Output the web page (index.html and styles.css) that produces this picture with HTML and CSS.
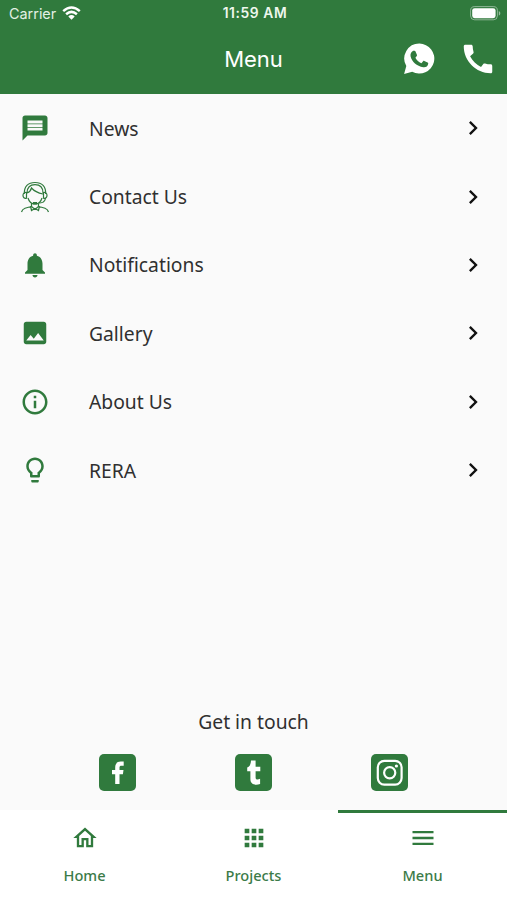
FILE: index.html
```html
<!DOCTYPE html>
<html lang="en">
<head>
<meta charset="utf-8">
<title>Menu</title>
<link rel="stylesheet" href="styles.css">
</head>
<body>
<header class="header">
  <div class="status">
    <div class="carrier"><span>Carrier</span>
      <svg width="19" height="14" viewBox="0 0 19 14" fill="none" stroke="currentColor" stroke-width="2.5"><path d="M1.2 5.1Q9.5-2 17.8 5.1M4.1 8.2Q9.5 3.6 14.9 8.2"/><path d="M6.3 10.4Q9.5 7.6 12.7 10.4L9.5 13.8Z" fill="currentColor" stroke="none"/></svg>
    </div>
    <time class="clock">11:59 AM</time>
    <svg class="battery" width="31" height="15" viewBox="0 0 31 15"><rect x=".6" y=".6" width="26.8" height="13.2" rx="4" fill="none" stroke="#fff" stroke-opacity=".45"/><rect x="2.2" y="2.2" width="23.4" height="10" rx="2.4" fill="#fff"/><path d="M28.8 5c2 .8 2 3.8 0 4.600z" fill="#fff" fill-opacity=".5"/></svg>
  </div>
  <div class="toolbar">
    <h1 class="title">Menu</h1>
    <div class="actions">
      <svg class="whatsapp" width="32" height="32" viewBox="0 0 32 32"><path fill="currentColor" d="M16.400.600A15 15 0 1 1 9.200 28.800L1.100 31 3.300 23.100A15 15 0 0 1 16.400.600Z"/><path fill="#307a3d" d="M10.200 7.700h1.300c.5 0 .8.3 1 .8l1.400 3.300c.2.5.1.8-.1 1.100l-1.400 1.800c1.300 2.600 3.300 4.400 6 5.500l1.700-2c.3-.4.7-.5 1.200-.3l3.300 1.600c.6.3.7.6.6 1.200-.3 2.600-2.400 3.800-4.900 3.500C13.600 23.300 9 18.600 7.600 13.500 7 11 8.300 8.600 10.200 7.700Z"/></svg>
      <svg class="phone" width="38" height="38" viewBox="0 0 24 24" fill="currentColor"><path d="M20.010 15.380c-1.230 0-2.420-.2-3.530-.56-.35-.12-.74-.03-1.010.24l-1.570 1.970c-2.830-1.350-5.480-3.900-6.890-6.830l1.950-1.660c.27-.28.35-.67.24-1.020-.37-1.110-.56-2.300-.56-3.530 0-.54-.45-.99-.99-.99H4.190C3.650 3 3 3.240 3 3.990 3 13.280 10.730 21 20.010 21c.71 0 .99-.63.99-1.180v-3.450c0-.54-.45-.99-.99-.99z"/></svg>
    </div>
  </div>
</header>
<main class="main">
  <nav class="list">
    <a class="row"><svg class="icon" viewBox="0 0 24 24"><path d="M20 2H4c-1.100 0-1.990.9-1.990 2L2 22l4-4h14c1.100 0 2-.9 2-2V4c0-1.100-.9-2-2-2zm-2 12H6v-2.300h12V14zm0-2.900H6V8.900h12v2.200zm0-2.800H6V6h12v2.300z"/></svg><span>News</span><svg class="chevron" viewBox="0 0 24 24"><path d="M10 6 8.590 7.410 13.170 12l-4.580 4.590L10 18l6-6z"/></svg></a>
    <a class="row"><svg class="icon agent" viewBox="0 0 30 32"><path d="M4.300 13C4 5.500 8 1.500 15 1.500S26 5.500 25.700 13M7 12C7 6.500 10 3.600 15 3.600S23 6.500 23 12M6.500 11.500C4 11 3 12.500 3 14.500s1.300 3.300 3.500 2.700zM23.500 11.500c2.500-.5 3.500 1 3.500 3s-1.300 3.300-3.500 2.700zM7 12c2.500-1 4-2.800 4.500-5 3 3.500 6.500 5 11.500 6M8 17c1 3.500 3.800 6 7 6s6-2.500 7-6M25.500 17.500c-.6 3-3.500 4.700-7.500 4.700M11.500 22v3.500l3.500 3 3.500-3V22M10.500 25l1 4.500 3.500-2 3.500 2 1-4.500M11 25.500l-6 1.700C3 28 2 29 1.500 31M19 25.500l6 1.700c2 .8 3 1.800 3.500 3.800"/><path class="solid" d="M13 21h4v2.500h-4z"/></svg><span>Contact Us</span><svg class="chevron" viewBox="0 0 24 24"><path d="M10 6 8.590 7.410 13.170 12l-4.580 4.590L10 18l6-6z"/></svg></a>
    <a class="row"><svg class="icon" viewBox="0 0 24 24"><path d="M12 22c1.100 0 2-.9 2-2h-4c0 1.100.89 2 2 2zm6-6v-5c0-3.070-1.640-5.640-4.500-6.320V4c0-.83-.67-1.500-1.500-1.500s-1.500.67-1.500 1.500v.68C7.630 5.360 6 7.920 6 11v5l-2 2v1h16v-1l-2-2z"/></svg><span>Notifications</span><svg class="chevron" viewBox="0 0 24 24"><path d="M10 6 8.590 7.410 13.170 12l-4.580 4.590L10 18l6-6z"/></svg></a>
    <a class="row"><svg class="icon" viewBox="0 0 24 24"><path d="M21 19V5c0-1.100-.9-2-2-2H5c-1.100 0-2 .9-2 2v14c0 1.100.9 2 2 2h14c1.100 0 2-.9 2-2zM8.500 13.500l2.500 3.010L14.500 12l4.500 6H5l3.500-4.500z"/></svg><span>Gallery</span><svg class="chevron" viewBox="0 0 24 24"><path d="M10 6 8.590 7.410 13.170 12l-4.580 4.590L10 18l6-6z"/></svg></a>
    <a class="row"><svg class="icon" viewBox="0 0 24 24"><path d="M11 7h2v2h-2zm0 4h2v6h-2zm1-9C6.480 2 2 6.480 2 12s4.480 10 10 10 10-4.480 10-10S17.520 2 12 2zm0 18c-4.410 0-8-3.590-8-8s3.590-8 8-8 8 3.590 8 8-3.590 8-8 8z"/></svg><span>About Us</span><svg class="chevron" viewBox="0 0 24 24"><path d="M10 6 8.590 7.410 13.170 12l-4.580 4.590L10 18l6-6z"/></svg></a>
    <a class="row"><svg class="icon" viewBox="0 0 24 24"><path d="M9 21c0 .55.45 1 1 1h4c.55 0 1-.45 1-1v-1H9v1zm3-19C8.140 2 5 5.140 5 9c0 2.380 1.190 4.470 3 5.740V17c0 .55.45 1 1 1h6c.55 0 1-.45 1-1v-2.260c1.810-1.270 3-3.360 3-5.740 0-3.860-3.140-7-7-7zm2.850 11.100l-.85.6V16h-4v-2.300l-.85-.6C7.800 12.160 7 10.630 7 9c0-2.760 2.240-5 5-5s5 2.240 5 5c0 1.630-.8 3.160-2.150 4.100z"/></svg><span>RERA</span><svg class="chevron" viewBox="0 0 24 24"><path d="M10 6 8.590 7.410 13.170 12l-4.580 4.590L10 18l6-6z"/></svg></a>
  </nav>
  <section class="touch">
    <h2 class="touch-title">Get in touch</h2>
    <div class="social">
      <a><svg viewBox="0 0 37 37"><rect width="37" height="37" rx="5"/><path class="light" d="M16.200 30V20.200H13v-4.200h3.200v-2.700c0-3.700 2.100-5.700 5.600-5.700h2.900v4.100h-2.300c-1.300 0-1.900.6-1.900 1.800V16h4l-.6 4.200h-3.400V30z"/></svg></a>
      <a><svg viewBox="0 0 37 37"><rect width="37" height="37" rx="5"/><path class="light" d="M16 6.500h4.600v6.200h4.700v4.500h-4.700v6.300c0 2.200 1.900 2.700 4.500 1.300V30c-5 1.700-9.700.3-9.700-4.800v-8h-3.200v-3.600c2.500-.9 3.500-3.200 3.800-7.100z"/></svg></a>
      <a><svg viewBox="0 0 37 37"><rect width="37" height="37" rx="5"/><rect class="line" x="6.800" y="6.800" width="23.800" height="23.800" rx="6.500"/><circle class="line" cx="18.700" cy="18.700" r="5.600"/><circle class="light" cx="25.400" cy="12" r="1.600"/></svg></a>
    </div>
  </section>
</main>
<nav class="tabs">
  <a class="tab"><svg viewBox="0 0 24 24"><path d="m12 3-10 9h3v8h6v-6h2v6h6v-8h3L12 3zm5 15h-2v-6H9v6H7v-7.810l5-4.500 5 4.500V18z"/></svg><span>Home</span></a>
  <a class="tab"><svg viewBox="0 0 24 24"><path d="M4 8h4V4H4v4zm6 12h4v-4h-4v4zm-6 0h4v-4H4v4zm0-6h4v-4H4v4zm6 0h4v-4h-4v4zm6-10v4h4V4h-4zm-6 4h4V4h-4v4zm6 6h4v-4h-4v4zm0 6h4v-4h-4v4z"/></svg><span>Projects</span></a>
  <a class="tab active"><svg viewBox="0 0 24 24"><path d="M3 18h18v-2H3v2zm0-5h18v-2H3v2zm0-7v2h18V6H3z"/></svg><span>Menu</span></a>
</nav>
</body>
</html>
```
FILE: styles.css
```css
* { box-sizing: border-box; }
body {
  margin: 0;
  height: 900px;
  display: flex;
  flex-direction: column;
  background: #fafafa;
  color: #303030;
  font-family: "Noto Sans", sans-serif;
  overflow: hidden;
}
svg { display: block; flex: none; }
h1, h2 { margin: 0; font-weight: 400; }
.header {
  height: 94px;
  flex: none;
  background: #307a3d;
  color: #fff;
  font-family: Inter, sans-serif;
}
.status {
  height: 26px;
  display: grid;
  grid-template-columns: 1fr auto 1fr;
  align-items: center;
  padding: 0 6px 0 9px;
}
.carrier { display: flex; align-items: center; gap: 6px; font-size: 14.4px; color: #e3f0e4; }
.carrier svg { color: #fff; }
.clock { font-size: 13.8px; font-weight: 600; letter-spacing: .6px; color: #eef7ee; }
.battery { justify-self: end; }
.toolbar {
  height: 66px;
  display: grid;
  grid-template-columns: 1fr auto 1fr;
  align-items: center;
  padding: 0 10px;
}
.title { grid-column: 2; font-size: 22px; line-height: 28px; }
.actions { display: flex; justify-content: flex-end; align-items: center; gap: 24px; }
.main { flex: 1; display: flex; flex-direction: column; }
.row {
  height: 68.4px;
  display: grid;
  grid-template-columns: 30px 1fr 28px;
  column-gap: 39px;
  align-items: center;
  padding: 0 20px;
  font-size: 19.3px;
}
.icon { width: 30px; height: 30px; fill: #307a3d; }
.agent { height: 32px; fill: none; stroke: #307a3d; stroke-width: 1.2; }
.agent .solid { fill: #307a3d; stroke: none; }
.chevron { width: 28px; height: 28px; fill: #111; }
.touch { margin-top: auto; padding-bottom: 19px; }
.touch-title { text-align: center; font-size: 19.3px; line-height: 26px; margin-bottom: 19px; }
.social { display: flex; justify-content: center; gap: 99px; }
.social svg { width: 37px; height: 37px; fill: #307a3d; }
.social .light { fill: #fff; }
.social .line { fill: none; stroke: #fff; stroke-width: 2.2; }
.tabs {
  height: 90px;
  flex: none;
  display: grid;
  grid-template-columns: repeat(3, 1fr);
  background: #fff;
}
.tab {
  display: flex;
  flex-direction: column;
  align-items: center;
  border-top: 3.5px solid transparent;
  padding-top: 11px;
  gap: 13px;
  color: #3b7b48;
  font-size: 14.6px;
  font-weight: 500;
  line-height: 20px;
}
.tab svg { width: 28px; height: 28px; fill: #307a3d; }
.active { border-top-color: #307a3d; }
```
